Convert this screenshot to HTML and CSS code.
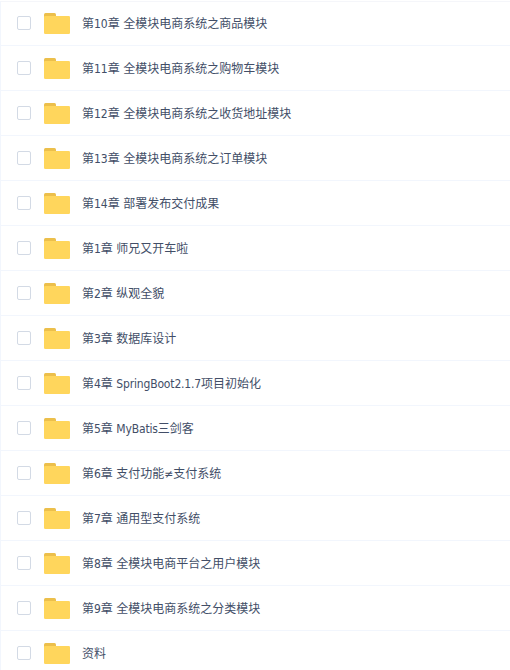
FILE: index.html
```
<!DOCTYPE html>
<html lang="zh-CN">
<head>
  <meta charset="UTF-8">
  <meta name="viewport" content="width=device-width, initial-scale=1.0">
  <title>全部文件</title>
  <link rel="stylesheet" href="styles.css">
</head>
<body>
  <ul class="file-list" id="file-list">
    <!-- Rows are inserted here -->
  </ul>

  <script>
    const folders = [
      "第10章 全模块电商系统之商品模块",
      "第11章 全模块电商系统之购物车模块",
      "第12章 全模块电商系统之收货地址模块",
      "第13章 全模块电商系统之订单模块",
      "第14章 部署发布交付成果",
      "第1章 师兄又开车啦",
      "第2章 纵观全貌",
      "第3章 数据库设计",
      "第4章 <span class=\"latin\">SpringBoot2.1.7</span>项目初始化",
      "第5章 <span class=\"latin\">MyBatis</span>三剑客",
      "第6章 支付功能≠支付系统",
      "第7章 通用型支付系统",
      "第8章 全模块电商平台之用户模块",
      "第9章 全模块电商系统之分类模块",
      "资料"
    ];

    const list = document.getElementById('file-list');

    folders.forEach(name => {
      const row = document.createElement('li');
      row.classList.add('file-row');
      row.innerHTML = `
        <span class="checkbox"></span>
        <svg class="folder" width="26" height="21" viewBox="0 0 26 21">
          <path d="M0 5V1.5Q0 0 1.5 0H10.5Q12 0 12 1.5V5Z" fill="#ecbf4b"/>
          <rect y="3" width="26" height="18" rx="1.3" fill="#ffd65c"/>
        </svg>
        <span class="name">${name}</span>
      `;
      list.appendChild(row);
    });
  </script>
</body>
</html>
```

FILE: styles.css
```
body {
  margin: 0;
  background-color: #fff;
  overflow: hidden;
}

.file-list {
  list-style: none;
  margin: 1px 0 0;
  padding: 0;
  height: 669px;
  overflow: hidden;
  box-sizing: border-box;
  border-top: 1px solid #f5f6fa;
  border-left: 1px solid #f2f6fd;
}

.file-row {
  display: flex;
  align-items: center;
  box-sizing: border-box;
  height: 45px;
  padding-left: 16px;
  border-bottom: 1px solid #f2f6fd;
}

.file-row:first-child {
  height: 44px;
  padding-bottom: 1px;
}

.checkbox {
  box-sizing: border-box;
  width: 14px;
  height: 14px;
  border: 1px solid #d3dae5;
  border-radius: 2px;
}

.folder {
  display: block;
  margin: 1px 12px 0 13px;
}

.name {
  margin-top: 2px;
  font-family: "DejaVu Sans Condensed", "Noto Sans CJK SC", sans-serif;
  font-size: 12px;
  line-height: 18px;
  color: #424e67;
  white-space: nowrap;
}

.latin {
  letter-spacing: -0.16px;
}
```
